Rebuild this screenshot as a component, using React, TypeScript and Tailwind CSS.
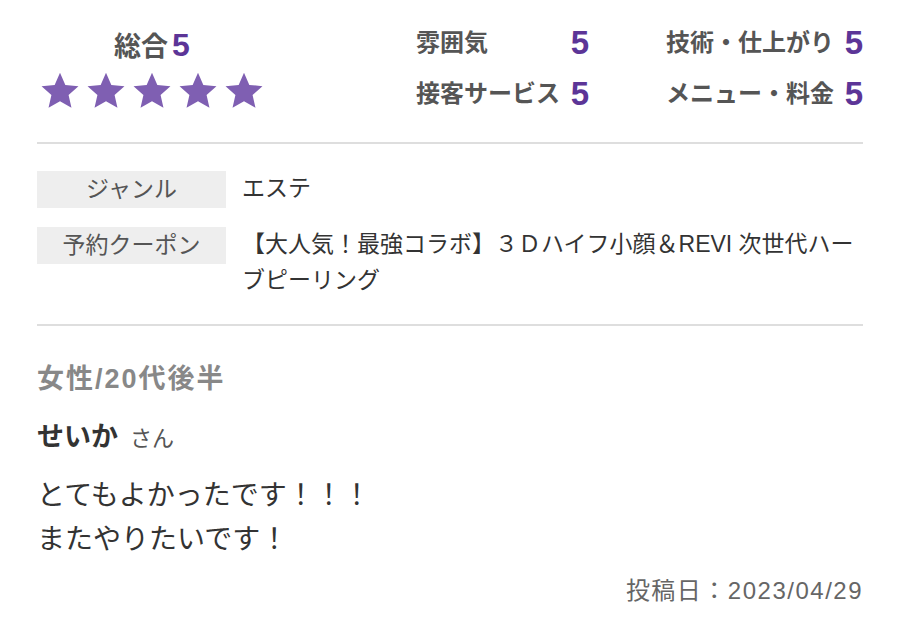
const font = { fontFamily: '"Liberation Sans", "Noto Sans CJK JP", sans-serif' };

function Star() {
  return (
    <svg viewBox="0 0 24 24" className="h-[42px] w-[42px]">
      <path
        d="M12 1.6l3.05 6.9 7.5.75-5.65 5 1.65 7.35L12 17.8l-6.55 3.8 1.65-7.35-5.65-5 7.5-.75z"
        fill="#7f5fb2"
      />
    </svg>
  );
}

const scores = [
  { label: "雰囲気", value: 5 },
  { label: "技術・仕上がり", value: 5 },
  { label: "接客サービス", value: 5 },
  { label: "メニュー・料金", value: 5 },
];

const details = [
  { label: "ジャンル", value: "エステ" },
  { label: "予約クーポン", value: "【大人気！最強コラボ】３Ｄハイフ小顔＆REVI 次世代ハーブピーリング" },
];

export default function App() {
  return (
    <div className="min-h-[634px] bg-white px-[37px] pt-[26px]" style={font}>
      <div className="flex items-start">
        <div className="flex w-[230px] flex-col items-center">
          <div className="flex items-baseline text-[27px] font-bold leading-[38px] text-[#555]">
            総合<span className="ml-[4px] text-[32px] text-[#5c3597]">5</span>
          </div>
          <div className="mt-[4px] flex gap-[4px]">
            {[0, 1, 2, 3, 4].map((i) => (
              <Star key={i} />
            ))}
          </div>
        </div>

        <div className="-mt-[2px] ml-auto grid grid-cols-[173px_197px] gap-x-[77px] gap-y-[13px]">
          {scores.map((s) => (
            <div key={s.label} className="flex h-[38px] items-center justify-between">
              <span className="text-[24px] font-bold text-[#555]">{s.label}</span>
              <span className="text-[33px] font-bold text-[#5c3597]">{s.value}</span>
            </div>
          ))}
        </div>
      </div>

      <div className="mt-[29px] h-[2px] bg-[#dedede]" />

      <div className="flex flex-col gap-[19px] pt-[27px] pb-[26px]">
        {details.map((d) => (
          <div key={d.label} className="flex items-start">
            <div className="flex h-[37px] w-[189px] shrink-0 items-center justify-center bg-[#eeeeee] text-[23px] text-[#555]">
              {d.label}
            </div>
            <div className="-mt-[1px] ml-[16px] text-[23px] leading-[36px] text-[#333]">{d.value}</div>
          </div>
        ))}
      </div>

      <div className="h-[2px] bg-[#dedede]" />

      <div className="mt-[34px] text-[27px] font-bold leading-[38px] tracking-[2px] text-[#888]">女性/20代後半</div>
      <div className="mt-[20px] flex items-baseline gap-[12px] leading-[38px]">
        <span className="text-[27px] font-bold text-[#333]">せいか</span>
        <span className="text-[22px] text-[#555]">さん</span>
      </div>
      <div className="mt-[16px] text-[28px] leading-[44px] text-[#333]">
        <p>とてもよかったです！！！</p>
        <p>またやりたいです！</p>
      </div>
      <div className="mt-[12px] text-right text-[24px] leading-[34px] tracking-[1.5px] text-[#666]">投稿日：2023/04/29</div>
    </div>
  );
}
